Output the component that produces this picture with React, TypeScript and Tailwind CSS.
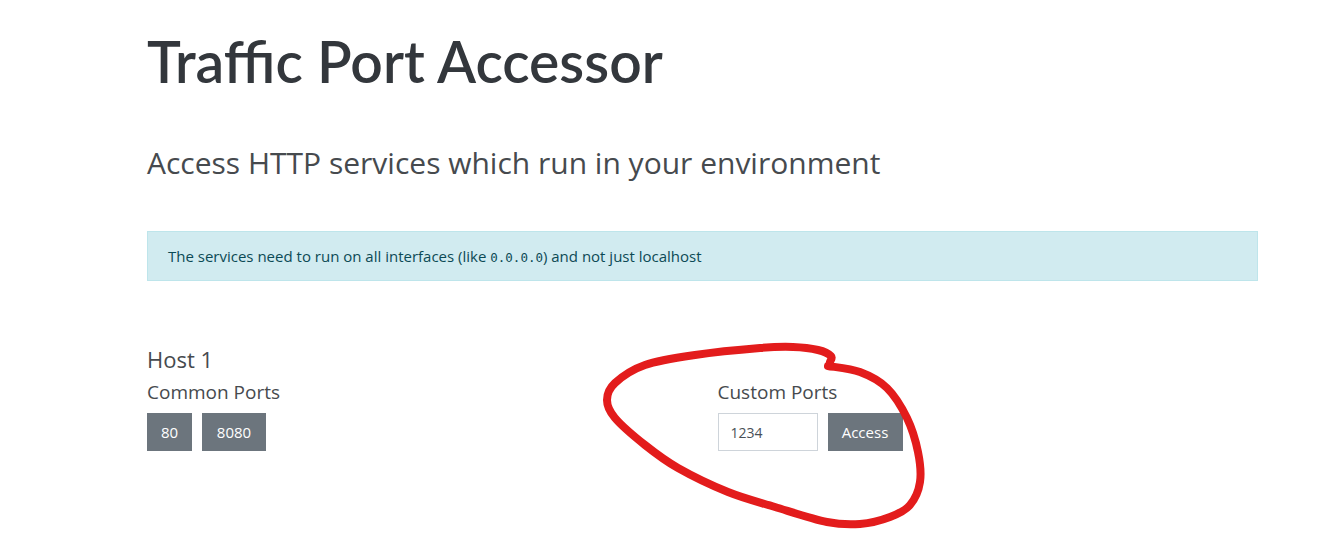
import React from "react";

const pts: [number, number][] = [
  [828, 366], [860, 372], [887, 388], [907, 418], [918, 452], [920, 482], [910, 505],
  [890, 517], [860, 524], [827, 522], [775, 507], [728, 492], [678, 468], [645, 445],
  [615, 418], [607, 400], [615, 383], [645, 365], [695, 355], [760, 348], [793, 347],
  [818, 350], [831, 356], [830, 362],
];

function smooth(p: [number, number][]) {
  let d = `M ${p[0][0]} ${p[0][1]}`;
  for (let i = 0; i < p.length - 1; i++) {
    const p0 = p[i - 1] || p[i];
    const p1 = p[i];
    const p2 = p[i + 1];
    const p3 = p[i + 2] || p2;
    const c1x = p1[0] + (p2[0] - p0[0]) / 6;
    const c1y = p1[1] + (p2[1] - p0[1]) / 6;
    const c2x = p2[0] - (p3[0] - p1[0]) / 6;
    const c2y = p2[1] - (p3[1] - p1[1]) / 6;
    d += ` C ${c1x} ${c1y} ${c2x} ${c2y} ${p2[0]} ${p2[1]}`;
  }
  return d;
}

export default function App() {
  return (
    <div className="relative min-h-[558px] bg-white font-['Open_Sans',sans-serif]">
      <div className="pl-[147px] w-[1258px] pb-10">
        <h1 className="mt-0 pt-[27px] font-['Lato',sans-serif] text-[57px] leading-[1.2] font-semibold text-[#33373c]">
          Traffic Port Accessor
        </h1>
        <h2 className="mt-[50px] text-[30px] leading-[1.2] font-normal text-[#464a4e]">
          Access HTTP services which run in your environment
        </h2>
        <div className="mt-[50px] h-[50px] flex items-center px-[20px] bg-[#d1ebf0] border border-[#bee5eb] text-[15px] text-[#0c4a55]">
          <span>
            The services need to run on all interfaces (like{" "}
            <code className="font-['DejaVu_Sans_Mono',monospace] text-[12.5px]">0.0.0.0</code>) and not just
            localhost
          </span>
        </div>
        <div className="mt-[65px] text-[22px] leading-[1.2] text-[#464a4e]">Host 1</div>
        <div className="grid grid-cols-2 gap-x-[30px] mt-[8.5px]">
          <div>
            <div className="text-[19px] leading-[1.2] text-[#464a4e]">Common Ports</div>
            <div className="mt-[9px] flex gap-[10px]">
              <button className="h-[38px] w-[45px] bg-[#6c757d] text-white text-[15px]">80</button>
              <button className="h-[38px] w-[64px] bg-[#6c757d] text-white text-[15px]">8080</button>
            </div>
          </div>
          <div>
            <div className="text-[19px] leading-[1.2] text-[#464a4e]">Custom Ports</div>
            <div className="mt-[9px] flex gap-[10px]">
              <input
                defaultValue="1234"
                className="h-[38px] w-[100px] px-[12px] border border-[#ced4da] text-[14px] text-[#495057] outline-none"
              />
              <button className="h-[38px] w-[75px] bg-[#6c757d] text-white text-[15px]">Access</button>
            </div>
          </div>
        </div>
      </div>
      <svg className="absolute left-0 top-0 pointer-events-none" width="1338" height="558">
        <path d={smooth(pts)} fill="none" stroke="#e31c1c" strokeWidth="8" strokeLinecap="round" strokeLinejoin="round" />
      </svg>
    </div>
  );
}
